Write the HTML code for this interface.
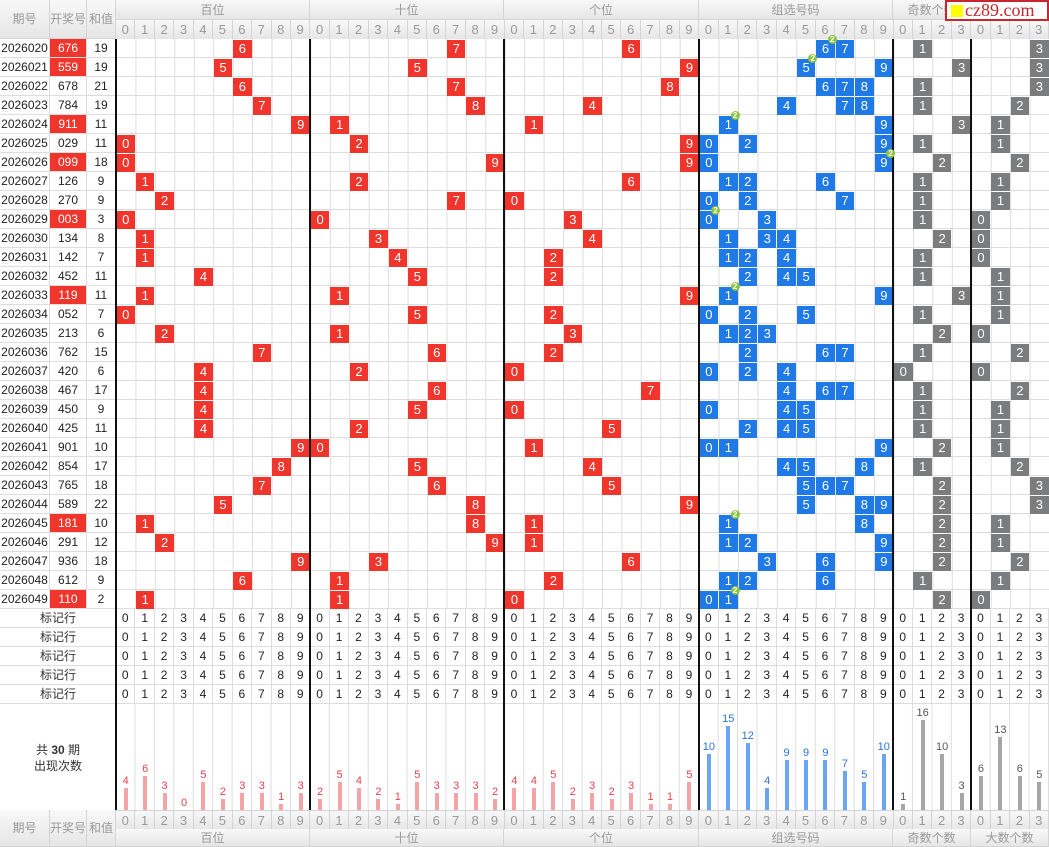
<!DOCTYPE html>
<html><head><meta charset="utf-8"><style>
*{margin:0;padding:0;box-sizing:border-box}
body{width:1049px;height:847px;position:relative;overflow:hidden;background:#fff;font-family:"Liberation Sans","Noto Sans CJK SC",sans-serif;font-size:12px;color:#222}
.a{position:absolute}
.hd{background:linear-gradient(#f8f8f8,#e6e6e6);color:#999;text-align:center;border-right:1px solid #d4d4d4;border-bottom:1px solid #d4d4d4}
.dr{display:flex;position:absolute;left:116px;width:933px}
.dr span{width:19.4375px;text-align:center;flex:none}
.hdr span{color:#999;border-right:1px solid #d4d4d4;background:linear-gradient(#f8f8f8,#e6e6e6);height:19px;line-height:19px;font-size:13px}
.mk span{height:19px;line-height:19px;border-right:1px solid #ddd;border-bottom:1px solid #ddd;font-size:12px}
b,u{position:absolute;font-weight:normal;text-decoration:none}
b{left:calc(116.5px + var(--c)*19.4375px);top:calc(39.5px + var(--r)*19px);width:18.5px;height:18px;line-height:18px;text-align:center;color:#fff;font-size:13px}
.R{background:#f0362c}.B{background:#1f7ae8}.G{background:#7a7c7e}
u{left:calc(128px + var(--c)*19.4375px);top:calc(35px + var(--r)*19px);width:9px;height:9px;border-radius:50%;background:#8bc53f;color:#fff;font-size:8px;line-height:9px;text-align:center;font-weight:bold;z-index:3}
.L{position:absolute;left:0;width:116px;height:19px;line-height:19px;font-size:12px}
.L i{position:absolute;font-style:normal;top:0;height:19px;border-right:1px solid #ddd;border-bottom:1px solid #ddd;text-align:center}
.L i:nth-child(1){left:0;width:50px}.L i:nth-child(2){left:50px;width:37px}.L i:nth-child(3){left:87px;width:29px}
.L i.p{background:#f0362c;color:#fff}
.v{position:absolute;width:2px;background:#111;top:39px;height:771px}
.bc{position:absolute;bottom:37px;width:19.4375px;left:calc(116px + var(--c)*19.4375px);display:flex;flex-direction:column;align-items:center}
.bc em{font-style:normal;font-size:11px;line-height:13px}
.bc s{display:block;width:4px;height:calc(var(--h)*5.6px)}
.p1 em{color:#e8424a}.p1 s{background:#f4a3a6}
.p2 em{color:#2a73d4}.p2 s{background:#6aa6f2}
.p3 em{color:#555}.p3 s{background:#a6a6a6}
</style></head><body>
<!-- header -->
<div class="a hd" style="left:0;top:0;width:50px;height:39px;line-height:39px">期号</div>
<div class="a hd" style="left:50px;top:0;width:37px;height:39px;line-height:39px">开奖号</div>
<div class="a hd" style="left:87px;top:0;width:29px;height:39px;line-height:39px">和值</div>
<div class="a hd" style="left:116px;top:0;width:194px;height:20px;line-height:20px">百位</div>
<div class="a hd" style="left:310px;top:0;width:194px;height:20px;line-height:20px">十位</div>
<div class="a hd" style="left:504px;top:0;width:195px;height:20px;line-height:20px">个位</div>
<div class="a hd" style="left:699px;top:0;width:194px;height:20px;line-height:20px">组选号码</div>
<div class="a hd" style="left:893px;top:0;width:78px;height:20px;line-height:20px">奇数个数</div>
<div class="a hd" style="left:971px;top:0;width:78px;height:20px;line-height:20px">大数个数</div>
<div class="dr hdr" style="top:20px"><span>0</span><span>1</span><span>2</span><span>3</span><span>4</span><span>5</span><span>6</span><span>7</span><span>8</span><span>9</span><span>0</span><span>1</span><span>2</span><span>3</span><span>4</span><span>5</span><span>6</span><span>7</span><span>8</span><span>9</span><span>0</span><span>1</span><span>2</span><span>3</span><span>4</span><span>5</span><span>6</span><span>7</span><span>8</span><span>9</span><span>0</span><span>1</span><span>2</span><span>3</span><span>4</span><span>5</span><span>6</span><span>7</span><span>8</span><span>9</span><span>0</span><span>1</span><span>2</span><span>3</span><span>0</span><span>1</span><span>2</span><span>3</span></div>
<div class="a" style="left:945px;top:0;width:104px;height:21px;background:#fff;border:2px solid #c8262e;z-index:5;font-family:'Liberation Serif',serif;font-size:18px;color:#c8262e;line-height:17px;padding-left:4px"><span style="display:inline-block;width:12px;height:12px;background:#ff0;vertical-align:-1px;margin-right:2px"></span>cz89.com</div>
<!-- data grid -->
<div class="a" style="left:116px;top:39px;width:933px;height:570px;background-image:linear-gradient(to right,#ddd 1px,transparent 1px),linear-gradient(to bottom,transparent 18px,#ddd 18px);background-size:19.4375px 19px,19.4375px 19px"></div>
<!-- left columns -->
<div class="L" style="top:39px"><i>2026020</i><i class="p">676</i><i>19</i></div>
<div class="L" style="top:58px"><i>2026021</i><i class="p">559</i><i>19</i></div>
<div class="L" style="top:77px"><i>2026022</i><i>678</i><i>21</i></div>
<div class="L" style="top:96px"><i>2026023</i><i>784</i><i>19</i></div>
<div class="L" style="top:115px"><i>2026024</i><i class="p">911</i><i>11</i></div>
<div class="L" style="top:134px"><i>2026025</i><i>029</i><i>11</i></div>
<div class="L" style="top:153px"><i>2026026</i><i class="p">099</i><i>18</i></div>
<div class="L" style="top:172px"><i>2026027</i><i>126</i><i>9</i></div>
<div class="L" style="top:191px"><i>2026028</i><i>270</i><i>9</i></div>
<div class="L" style="top:210px"><i>2026029</i><i class="p">003</i><i>3</i></div>
<div class="L" style="top:229px"><i>2026030</i><i>134</i><i>8</i></div>
<div class="L" style="top:248px"><i>2026031</i><i>142</i><i>7</i></div>
<div class="L" style="top:267px"><i>2026032</i><i>452</i><i>11</i></div>
<div class="L" style="top:286px"><i>2026033</i><i class="p">119</i><i>11</i></div>
<div class="L" style="top:305px"><i>2026034</i><i>052</i><i>7</i></div>
<div class="L" style="top:324px"><i>2026035</i><i>213</i><i>6</i></div>
<div class="L" style="top:343px"><i>2026036</i><i>762</i><i>15</i></div>
<div class="L" style="top:362px"><i>2026037</i><i>420</i><i>6</i></div>
<div class="L" style="top:381px"><i>2026038</i><i>467</i><i>17</i></div>
<div class="L" style="top:400px"><i>2026039</i><i>450</i><i>9</i></div>
<div class="L" style="top:419px"><i>2026040</i><i>425</i><i>11</i></div>
<div class="L" style="top:438px"><i>2026041</i><i>901</i><i>10</i></div>
<div class="L" style="top:457px"><i>2026042</i><i>854</i><i>17</i></div>
<div class="L" style="top:476px"><i>2026043</i><i>765</i><i>18</i></div>
<div class="L" style="top:495px"><i>2026044</i><i>589</i><i>22</i></div>
<div class="L" style="top:514px"><i>2026045</i><i class="p">181</i><i>10</i></div>
<div class="L" style="top:533px"><i>2026046</i><i>291</i><i>12</i></div>
<div class="L" style="top:552px"><i>2026047</i><i>936</i><i>18</i></div>
<div class="L" style="top:571px"><i>2026048</i><i>612</i><i>9</i></div>
<div class="L" style="top:590px"><i>2026049</i><i class="p">110</i><i>2</i></div>
<!-- cells -->
<b class="R" style="--c:6;--r:0">6</b><b class="R" style="--c:17;--r:0">7</b><b class="R" style="--c:26;--r:0">6</b><b class="B" style="--c:36;--r:0">6</b><b class="B" style="--c:37;--r:0">7</b><u style="--c:36;--r:0">2</u><b class="G" style="--c:41;--r:0">1</b><b class="G" style="--c:47;--r:0">3</b>
<b class="R" style="--c:5;--r:1">5</b><b class="R" style="--c:15;--r:1">5</b><b class="R" style="--c:29;--r:1">9</b><b class="B" style="--c:35;--r:1">5</b><b class="B" style="--c:39;--r:1">9</b><u style="--c:35;--r:1">2</u><b class="G" style="--c:43;--r:1">3</b><b class="G" style="--c:47;--r:1">3</b>
<b class="R" style="--c:6;--r:2">6</b><b class="R" style="--c:17;--r:2">7</b><b class="R" style="--c:28;--r:2">8</b><b class="B" style="--c:36;--r:2">6</b><b class="B" style="--c:37;--r:2">7</b><b class="B" style="--c:38;--r:2">8</b><b class="G" style="--c:41;--r:2">1</b><b class="G" style="--c:47;--r:2">3</b>
<b class="R" style="--c:7;--r:3">7</b><b class="R" style="--c:18;--r:3">8</b><b class="R" style="--c:24;--r:3">4</b><b class="B" style="--c:34;--r:3">4</b><b class="B" style="--c:37;--r:3">7</b><b class="B" style="--c:38;--r:3">8</b><b class="G" style="--c:41;--r:3">1</b><b class="G" style="--c:46;--r:3">2</b>
<b class="R" style="--c:9;--r:4">9</b><b class="R" style="--c:11;--r:4">1</b><b class="R" style="--c:21;--r:4">1</b><b class="B" style="--c:31;--r:4">1</b><b class="B" style="--c:39;--r:4">9</b><u style="--c:31;--r:4">2</u><b class="G" style="--c:43;--r:4">3</b><b class="G" style="--c:45;--r:4">1</b>
<b class="R" style="--c:0;--r:5">0</b><b class="R" style="--c:12;--r:5">2</b><b class="R" style="--c:29;--r:5">9</b><b class="B" style="--c:30;--r:5">0</b><b class="B" style="--c:32;--r:5">2</b><b class="B" style="--c:39;--r:5">9</b><b class="G" style="--c:41;--r:5">1</b><b class="G" style="--c:45;--r:5">1</b>
<b class="R" style="--c:0;--r:6">0</b><b class="R" style="--c:19;--r:6">9</b><b class="R" style="--c:29;--r:6">9</b><b class="B" style="--c:30;--r:6">0</b><b class="B" style="--c:39;--r:6">9</b><u style="--c:39;--r:6">2</u><b class="G" style="--c:42;--r:6">2</b><b class="G" style="--c:46;--r:6">2</b>
<b class="R" style="--c:1;--r:7">1</b><b class="R" style="--c:12;--r:7">2</b><b class="R" style="--c:26;--r:7">6</b><b class="B" style="--c:31;--r:7">1</b><b class="B" style="--c:32;--r:7">2</b><b class="B" style="--c:36;--r:7">6</b><b class="G" style="--c:41;--r:7">1</b><b class="G" style="--c:45;--r:7">1</b>
<b class="R" style="--c:2;--r:8">2</b><b class="R" style="--c:17;--r:8">7</b><b class="R" style="--c:20;--r:8">0</b><b class="B" style="--c:30;--r:8">0</b><b class="B" style="--c:32;--r:8">2</b><b class="B" style="--c:37;--r:8">7</b><b class="G" style="--c:41;--r:8">1</b><b class="G" style="--c:45;--r:8">1</b>
<b class="R" style="--c:0;--r:9">0</b><b class="R" style="--c:10;--r:9">0</b><b class="R" style="--c:23;--r:9">3</b><b class="B" style="--c:30;--r:9">0</b><b class="B" style="--c:33;--r:9">3</b><u style="--c:30;--r:9">2</u><b class="G" style="--c:41;--r:9">1</b><b class="G" style="--c:44;--r:9">0</b>
<b class="R" style="--c:1;--r:10">1</b><b class="R" style="--c:13;--r:10">3</b><b class="R" style="--c:24;--r:10">4</b><b class="B" style="--c:31;--r:10">1</b><b class="B" style="--c:33;--r:10">3</b><b class="B" style="--c:34;--r:10">4</b><b class="G" style="--c:42;--r:10">2</b><b class="G" style="--c:44;--r:10">0</b>
<b class="R" style="--c:1;--r:11">1</b><b class="R" style="--c:14;--r:11">4</b><b class="R" style="--c:22;--r:11">2</b><b class="B" style="--c:31;--r:11">1</b><b class="B" style="--c:32;--r:11">2</b><b class="B" style="--c:34;--r:11">4</b><b class="G" style="--c:41;--r:11">1</b><b class="G" style="--c:44;--r:11">0</b>
<b class="R" style="--c:4;--r:12">4</b><b class="R" style="--c:15;--r:12">5</b><b class="R" style="--c:22;--r:12">2</b><b class="B" style="--c:32;--r:12">2</b><b class="B" style="--c:34;--r:12">4</b><b class="B" style="--c:35;--r:12">5</b><b class="G" style="--c:41;--r:12">1</b><b class="G" style="--c:45;--r:12">1</b>
<b class="R" style="--c:1;--r:13">1</b><b class="R" style="--c:11;--r:13">1</b><b class="R" style="--c:29;--r:13">9</b><b class="B" style="--c:31;--r:13">1</b><b class="B" style="--c:39;--r:13">9</b><u style="--c:31;--r:13">2</u><b class="G" style="--c:43;--r:13">3</b><b class="G" style="--c:45;--r:13">1</b>
<b class="R" style="--c:0;--r:14">0</b><b class="R" style="--c:15;--r:14">5</b><b class="R" style="--c:22;--r:14">2</b><b class="B" style="--c:30;--r:14">0</b><b class="B" style="--c:32;--r:14">2</b><b class="B" style="--c:35;--r:14">5</b><b class="G" style="--c:41;--r:14">1</b><b class="G" style="--c:45;--r:14">1</b>
<b class="R" style="--c:2;--r:15">2</b><b class="R" style="--c:11;--r:15">1</b><b class="R" style="--c:23;--r:15">3</b><b class="B" style="--c:31;--r:15">1</b><b class="B" style="--c:32;--r:15">2</b><b class="B" style="--c:33;--r:15">3</b><b class="G" style="--c:42;--r:15">2</b><b class="G" style="--c:44;--r:15">0</b>
<b class="R" style="--c:7;--r:16">7</b><b class="R" style="--c:16;--r:16">6</b><b class="R" style="--c:22;--r:16">2</b><b class="B" style="--c:32;--r:16">2</b><b class="B" style="--c:36;--r:16">6</b><b class="B" style="--c:37;--r:16">7</b><b class="G" style="--c:41;--r:16">1</b><b class="G" style="--c:46;--r:16">2</b>
<b class="R" style="--c:4;--r:17">4</b><b class="R" style="--c:12;--r:17">2</b><b class="R" style="--c:20;--r:17">0</b><b class="B" style="--c:30;--r:17">0</b><b class="B" style="--c:32;--r:17">2</b><b class="B" style="--c:34;--r:17">4</b><b class="G" style="--c:40;--r:17">0</b><b class="G" style="--c:44;--r:17">0</b>
<b class="R" style="--c:4;--r:18">4</b><b class="R" style="--c:16;--r:18">6</b><b class="R" style="--c:27;--r:18">7</b><b class="B" style="--c:34;--r:18">4</b><b class="B" style="--c:36;--r:18">6</b><b class="B" style="--c:37;--r:18">7</b><b class="G" style="--c:41;--r:18">1</b><b class="G" style="--c:46;--r:18">2</b>
<b class="R" style="--c:4;--r:19">4</b><b class="R" style="--c:15;--r:19">5</b><b class="R" style="--c:20;--r:19">0</b><b class="B" style="--c:30;--r:19">0</b><b class="B" style="--c:34;--r:19">4</b><b class="B" style="--c:35;--r:19">5</b><b class="G" style="--c:41;--r:19">1</b><b class="G" style="--c:45;--r:19">1</b>
<b class="R" style="--c:4;--r:20">4</b><b class="R" style="--c:12;--r:20">2</b><b class="R" style="--c:25;--r:20">5</b><b class="B" style="--c:32;--r:20">2</b><b class="B" style="--c:34;--r:20">4</b><b class="B" style="--c:35;--r:20">5</b><b class="G" style="--c:41;--r:20">1</b><b class="G" style="--c:45;--r:20">1</b>
<b class="R" style="--c:9;--r:21">9</b><b class="R" style="--c:10;--r:21">0</b><b class="R" style="--c:21;--r:21">1</b><b class="B" style="--c:30;--r:21">0</b><b class="B" style="--c:31;--r:21">1</b><b class="B" style="--c:39;--r:21">9</b><b class="G" style="--c:42;--r:21">2</b><b class="G" style="--c:45;--r:21">1</b>
<b class="R" style="--c:8;--r:22">8</b><b class="R" style="--c:15;--r:22">5</b><b class="R" style="--c:24;--r:22">4</b><b class="B" style="--c:34;--r:22">4</b><b class="B" style="--c:35;--r:22">5</b><b class="B" style="--c:38;--r:22">8</b><b class="G" style="--c:41;--r:22">1</b><b class="G" style="--c:46;--r:22">2</b>
<b class="R" style="--c:7;--r:23">7</b><b class="R" style="--c:16;--r:23">6</b><b class="R" style="--c:25;--r:23">5</b><b class="B" style="--c:35;--r:23">5</b><b class="B" style="--c:36;--r:23">6</b><b class="B" style="--c:37;--r:23">7</b><b class="G" style="--c:42;--r:23">2</b><b class="G" style="--c:47;--r:23">3</b>
<b class="R" style="--c:5;--r:24">5</b><b class="R" style="--c:18;--r:24">8</b><b class="R" style="--c:29;--r:24">9</b><b class="B" style="--c:35;--r:24">5</b><b class="B" style="--c:38;--r:24">8</b><b class="B" style="--c:39;--r:24">9</b><b class="G" style="--c:42;--r:24">2</b><b class="G" style="--c:47;--r:24">3</b>
<b class="R" style="--c:1;--r:25">1</b><b class="R" style="--c:18;--r:25">8</b><b class="R" style="--c:21;--r:25">1</b><b class="B" style="--c:31;--r:25">1</b><b class="B" style="--c:38;--r:25">8</b><u style="--c:31;--r:25">2</u><b class="G" style="--c:42;--r:25">2</b><b class="G" style="--c:45;--r:25">1</b>
<b class="R" style="--c:2;--r:26">2</b><b class="R" style="--c:19;--r:26">9</b><b class="R" style="--c:21;--r:26">1</b><b class="B" style="--c:31;--r:26">1</b><b class="B" style="--c:32;--r:26">2</b><b class="B" style="--c:39;--r:26">9</b><b class="G" style="--c:42;--r:26">2</b><b class="G" style="--c:45;--r:26">1</b>
<b class="R" style="--c:9;--r:27">9</b><b class="R" style="--c:13;--r:27">3</b><b class="R" style="--c:26;--r:27">6</b><b class="B" style="--c:33;--r:27">3</b><b class="B" style="--c:36;--r:27">6</b><b class="B" style="--c:39;--r:27">9</b><b class="G" style="--c:42;--r:27">2</b><b class="G" style="--c:46;--r:27">2</b>
<b class="R" style="--c:6;--r:28">6</b><b class="R" style="--c:11;--r:28">1</b><b class="R" style="--c:22;--r:28">2</b><b class="B" style="--c:31;--r:28">1</b><b class="B" style="--c:32;--r:28">2</b><b class="B" style="--c:36;--r:28">6</b><b class="G" style="--c:41;--r:28">1</b><b class="G" style="--c:45;--r:28">1</b>
<b class="R" style="--c:1;--r:29">1</b><b class="R" style="--c:11;--r:29">1</b><b class="R" style="--c:20;--r:29">0</b><b class="B" style="--c:30;--r:29">0</b><b class="B" style="--c:31;--r:29">1</b><u style="--c:31;--r:29">2</u><b class="G" style="--c:42;--r:29">2</b><b class="G" style="--c:44;--r:29">0</b>
<!-- marker rows -->
<div class="a" style="left:0;top:609px;width:116px;height:95px;line-height:19px;text-align:center;font-size:12px;color:#333">标记行<br>标记行<br>标记行<br>标记行<br>标记行</div>
<div class="a" style="left:0;top:627px;width:116px;height:1px;background:#ddd"></div><div class="a" style="left:0;top:646px;width:116px;height:1px;background:#ddd"></div><div class="a" style="left:0;top:665px;width:116px;height:1px;background:#ddd"></div><div class="a" style="left:0;top:684px;width:116px;height:1px;background:#ddd"></div><div class="a" style="left:0;top:703px;width:116px;height:1px;background:#ddd"></div>
<div class="dr mk" style="top:609px"><span>0</span><span>1</span><span>2</span><span>3</span><span>4</span><span>5</span><span>6</span><span>7</span><span>8</span><span>9</span><span>0</span><span>1</span><span>2</span><span>3</span><span>4</span><span>5</span><span>6</span><span>7</span><span>8</span><span>9</span><span>0</span><span>1</span><span>2</span><span>3</span><span>4</span><span>5</span><span>6</span><span>7</span><span>8</span><span>9</span><span>0</span><span>1</span><span>2</span><span>3</span><span>4</span><span>5</span><span>6</span><span>7</span><span>8</span><span>9</span><span>0</span><span>1</span><span>2</span><span>3</span><span>0</span><span>1</span><span>2</span><span>3</span></div>
<div class="dr mk" style="top:628px"><span>0</span><span>1</span><span>2</span><span>3</span><span>4</span><span>5</span><span>6</span><span>7</span><span>8</span><span>9</span><span>0</span><span>1</span><span>2</span><span>3</span><span>4</span><span>5</span><span>6</span><span>7</span><span>8</span><span>9</span><span>0</span><span>1</span><span>2</span><span>3</span><span>4</span><span>5</span><span>6</span><span>7</span><span>8</span><span>9</span><span>0</span><span>1</span><span>2</span><span>3</span><span>4</span><span>5</span><span>6</span><span>7</span><span>8</span><span>9</span><span>0</span><span>1</span><span>2</span><span>3</span><span>0</span><span>1</span><span>2</span><span>3</span></div>
<div class="dr mk" style="top:647px"><span>0</span><span>1</span><span>2</span><span>3</span><span>4</span><span>5</span><span>6</span><span>7</span><span>8</span><span>9</span><span>0</span><span>1</span><span>2</span><span>3</span><span>4</span><span>5</span><span>6</span><span>7</span><span>8</span><span>9</span><span>0</span><span>1</span><span>2</span><span>3</span><span>4</span><span>5</span><span>6</span><span>7</span><span>8</span><span>9</span><span>0</span><span>1</span><span>2</span><span>3</span><span>4</span><span>5</span><span>6</span><span>7</span><span>8</span><span>9</span><span>0</span><span>1</span><span>2</span><span>3</span><span>0</span><span>1</span><span>2</span><span>3</span></div>
<div class="dr mk" style="top:666px"><span>0</span><span>1</span><span>2</span><span>3</span><span>4</span><span>5</span><span>6</span><span>7</span><span>8</span><span>9</span><span>0</span><span>1</span><span>2</span><span>3</span><span>4</span><span>5</span><span>6</span><span>7</span><span>8</span><span>9</span><span>0</span><span>1</span><span>2</span><span>3</span><span>4</span><span>5</span><span>6</span><span>7</span><span>8</span><span>9</span><span>0</span><span>1</span><span>2</span><span>3</span><span>4</span><span>5</span><span>6</span><span>7</span><span>8</span><span>9</span><span>0</span><span>1</span><span>2</span><span>3</span><span>0</span><span>1</span><span>2</span><span>3</span></div>
<div class="dr mk" style="top:685px"><span>0</span><span>1</span><span>2</span><span>3</span><span>4</span><span>5</span><span>6</span><span>7</span><span>8</span><span>9</span><span>0</span><span>1</span><span>2</span><span>3</span><span>4</span><span>5</span><span>6</span><span>7</span><span>8</span><span>9</span><span>0</span><span>1</span><span>2</span><span>3</span><span>4</span><span>5</span><span>6</span><span>7</span><span>8</span><span>9</span><span>0</span><span>1</span><span>2</span><span>3</span><span>4</span><span>5</span><span>6</span><span>7</span><span>8</span><span>9</span><span>0</span><span>1</span><span>2</span><span>3</span><span>0</span><span>1</span><span>2</span><span>3</span></div>
<!-- stats -->
<div class="a" style="left:116px;top:704px;width:933px;height:106px;background-image:linear-gradient(to left,#ddd 1px,transparent 1px);background-size:19.4375px 106px"></div>
<div class="a" style="left:0;top:742px;width:116px;text-align:center;font-size:12px;line-height:16px;color:#333">共 <strong>30</strong> 期<br>出现次数</div>
<div class="bc p1" style="--c:0;--h:4"><em>4</em><s></s></div><div class="bc p1" style="--c:1;--h:6"><em>6</em><s></s></div><div class="bc p1" style="--c:2;--h:3"><em>3</em><s></s></div><div class="bc p1" style="--c:3;--h:0"><em>0</em><s></s></div><div class="bc p1" style="--c:4;--h:5"><em>5</em><s></s></div><div class="bc p1" style="--c:5;--h:2"><em>2</em><s></s></div><div class="bc p1" style="--c:6;--h:3"><em>3</em><s></s></div><div class="bc p1" style="--c:7;--h:3"><em>3</em><s></s></div><div class="bc p1" style="--c:8;--h:1"><em>1</em><s></s></div><div class="bc p1" style="--c:9;--h:3"><em>3</em><s></s></div>
<div class="bc p1" style="--c:10;--h:2"><em>2</em><s></s></div><div class="bc p1" style="--c:11;--h:5"><em>5</em><s></s></div><div class="bc p1" style="--c:12;--h:4"><em>4</em><s></s></div><div class="bc p1" style="--c:13;--h:2"><em>2</em><s></s></div><div class="bc p1" style="--c:14;--h:1"><em>1</em><s></s></div><div class="bc p1" style="--c:15;--h:5"><em>5</em><s></s></div><div class="bc p1" style="--c:16;--h:3"><em>3</em><s></s></div><div class="bc p1" style="--c:17;--h:3"><em>3</em><s></s></div><div class="bc p1" style="--c:18;--h:3"><em>3</em><s></s></div><div class="bc p1" style="--c:19;--h:2"><em>2</em><s></s></div>
<div class="bc p1" style="--c:20;--h:4"><em>4</em><s></s></div><div class="bc p1" style="--c:21;--h:4"><em>4</em><s></s></div><div class="bc p1" style="--c:22;--h:5"><em>5</em><s></s></div><div class="bc p1" style="--c:23;--h:2"><em>2</em><s></s></div><div class="bc p1" style="--c:24;--h:3"><em>3</em><s></s></div><div class="bc p1" style="--c:25;--h:2"><em>2</em><s></s></div><div class="bc p1" style="--c:26;--h:3"><em>3</em><s></s></div><div class="bc p1" style="--c:27;--h:1"><em>1</em><s></s></div><div class="bc p1" style="--c:28;--h:1"><em>1</em><s></s></div><div class="bc p1" style="--c:29;--h:5"><em>5</em><s></s></div>
<div class="bc p2" style="--c:30;--h:10"><em>10</em><s></s></div><div class="bc p2" style="--c:31;--h:15"><em>15</em><s></s></div><div class="bc p2" style="--c:32;--h:12"><em>12</em><s></s></div><div class="bc p2" style="--c:33;--h:4"><em>4</em><s></s></div><div class="bc p2" style="--c:34;--h:9"><em>9</em><s></s></div><div class="bc p2" style="--c:35;--h:9"><em>9</em><s></s></div><div class="bc p2" style="--c:36;--h:9"><em>9</em><s></s></div><div class="bc p2" style="--c:37;--h:7"><em>7</em><s></s></div><div class="bc p2" style="--c:38;--h:5"><em>5</em><s></s></div><div class="bc p2" style="--c:39;--h:10"><em>10</em><s></s></div>
<div class="bc p3" style="--c:40;--h:1"><em>1</em><s></s></div><div class="bc p3" style="--c:41;--h:16"><em>16</em><s></s></div><div class="bc p3" style="--c:42;--h:10"><em>10</em><s></s></div><div class="bc p3" style="--c:43;--h:3"><em>3</em><s></s></div>
<div class="bc p3" style="--c:44;--h:6"><em>6</em><s></s></div><div class="bc p3" style="--c:45;--h:13"><em>13</em><s></s></div><div class="bc p3" style="--c:46;--h:6"><em>6</em><s></s></div><div class="bc p3" style="--c:47;--h:5"><em>5</em><s></s></div>
<!-- thick lines -->
<div class="v" style="left:115px"></div><div class="v" style="left:309px"></div><div class="v" style="left:503px"></div><div class="v" style="left:698px"></div><div class="v" style="left:892px"></div><div class="v" style="left:970px"></div>
<!-- footer -->
<div class="dr hdr" style="top:810px;border-top:1px solid #d4d4d4"><span>0</span><span>1</span><span>2</span><span>3</span><span>4</span><span>5</span><span>6</span><span>7</span><span>8</span><span>9</span><span>0</span><span>1</span><span>2</span><span>3</span><span>4</span><span>5</span><span>6</span><span>7</span><span>8</span><span>9</span><span>0</span><span>1</span><span>2</span><span>3</span><span>4</span><span>5</span><span>6</span><span>7</span><span>8</span><span>9</span><span>0</span><span>1</span><span>2</span><span>3</span><span>4</span><span>5</span><span>6</span><span>7</span><span>8</span><span>9</span><span>0</span><span>1</span><span>2</span><span>3</span><span>0</span><span>1</span><span>2</span><span>3</span></div>
<div class="a hd" style="left:0;top:810px;width:50px;height:37px;line-height:37px">期号</div>
<div class="a hd" style="left:50px;top:810px;width:37px;height:37px;line-height:37px">开奖号</div>
<div class="a hd" style="left:87px;top:810px;width:29px;height:37px;line-height:37px">和值</div>
<div class="a hd" style="left:116px;top:829px;width:194px;height:18px;line-height:18px">百位</div>
<div class="a hd" style="left:310px;top:829px;width:194px;height:18px;line-height:18px">十位</div>
<div class="a hd" style="left:504px;top:829px;width:195px;height:18px;line-height:18px">个位</div>
<div class="a hd" style="left:699px;top:829px;width:194px;height:18px;line-height:18px">组选号码</div>
<div class="a hd" style="left:893px;top:829px;width:78px;height:18px;line-height:18px">奇数个数</div>
<div class="a hd" style="left:971px;top:829px;width:78px;height:18px;line-height:18px">大数个数</div>
</body></html>
